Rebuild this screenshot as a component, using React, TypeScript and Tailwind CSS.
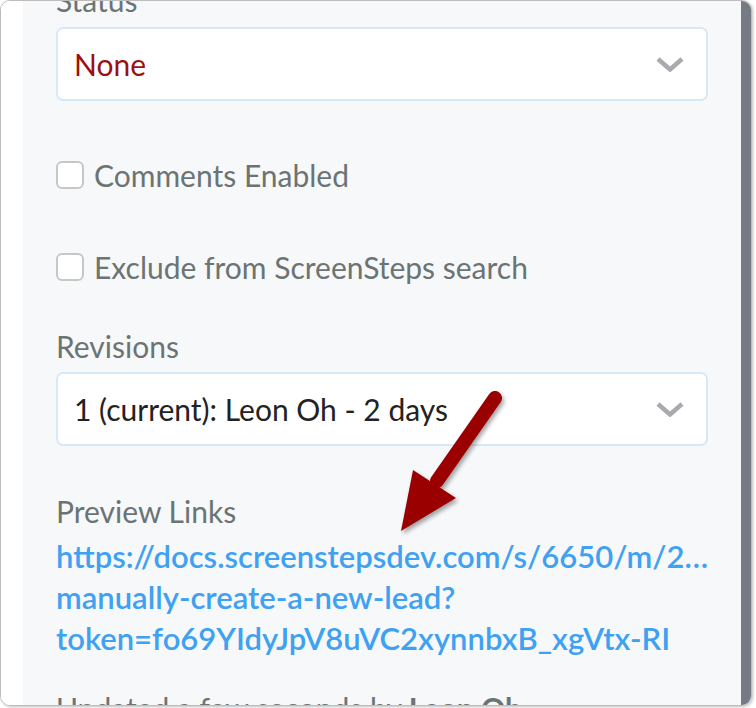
import React from 'react';

const Chevron: React.FC = () => (
  <svg width="28" height="16" viewBox="0 0 28 16" className="shrink-0">
    <polyline points="2,3 14,13.5 26,3" fill="none" stroke="#a9a9af" strokeWidth={4.5} strokeLinecap="butt" strokeLinejoin="miter" />
  </svg>
);

const Select: React.FC<{ value: string; className?: string }> = ({ value, className }) => (
  <div className="flex items-center justify-between h-[74px] rounded-[7px] border-2 border-[#d7e9f8] bg-white pl-[16px] pr-[22px]">
    <span className={className}>{value}</span>
    <Chevron />
  </div>
);

const CheckRow: React.FC<{ label: string }> = ({ label }) => (
  <label className="flex items-center gap-[10px] h-[40px]">
    <span className="w-[28px] h-[28px] rounded-[6px] border-2 border-[#c6c8c8] bg-white shrink-0" />
    <span className="text-[#6b7473]">{label}</span>
  </label>
);

export default function App() {
  return (
    <div className="w-[756px] h-[708px] bg-white" style={{ fontFamily: 'Lato, "Open Sans", sans-serif' }}>
      <div className="relative w-[752px] h-[706px] rounded-[10px] border border-[#bdbdbd] overflow-hidden flex shadow-[1px_1px_3px_rgba(0,0,0,0.25)]">
        <div className="w-[22px] bg-white shrink-0" />

        <div className="flex-1 bg-[#f7f8fa] px-[33px] text-[30px] leading-[34px]">
          <div className="mt-[-18px] text-[#6b7473]">Status</div>
          <div className="mt-[10px]">
            <Select value="None" className="text-[#9c1010]" />
          </div>

          <div className="mt-[54px]">
            <CheckRow label="Comments Enabled" />
          </div>
          <div className="mt-[52px]">
            <CheckRow label="Exclude from ScreenSteps search" />
          </div>

          <div className="mt-[42px] text-[#6b7473]">Revisions</div>
          <div className="mt-[9px]">
            <Select value="1 (current): Leon Oh - 2 days" className="text-[#222222]" />
          </div>

          <div className="mt-[48px] text-[#6b7473]">Preview Links</div>
          <a className="mt-[8px] block font-semibold text-[31px] text-[#3ea1f2] leading-[41px] whitespace-nowrap">
            <span className="block">https://docs.screenstepsdev.com/s/6650/m/2…</span>
            <span className="block">manually-create-a-new-lead?</span>
            <span className="block">token=fo69YIdyJpV8uVC2xynnbxB_xgVtx-RI</span>
          </a>

          <div className="mt-[32px] text-[#6b7473] whitespace-nowrap">
            Updated a few seconds by <span className="font-bold">Leon Oh</span>
          </div>
        </div>

        <div className="w-[11px] bg-[#757a84] shrink-0" />

        {/* annotation arrow */}
        <svg
          className="absolute left-0 top-0 pointer-events-none"
          width="752"
          height="706"
          viewBox="0 0 752 706"
          style={{ filter: 'drop-shadow(2px 3px 2px rgba(0,0,0,0.35))' }}
        >
          <line x1="494" y1="397" x2="436" y2="480" stroke="#9b0000" strokeWidth={14} strokeLinecap="round" />
          <polygon points="400,530 412,469 455,497" fill="#9b0000" />
        </svg>
      </div>
    </div>
  );
}
